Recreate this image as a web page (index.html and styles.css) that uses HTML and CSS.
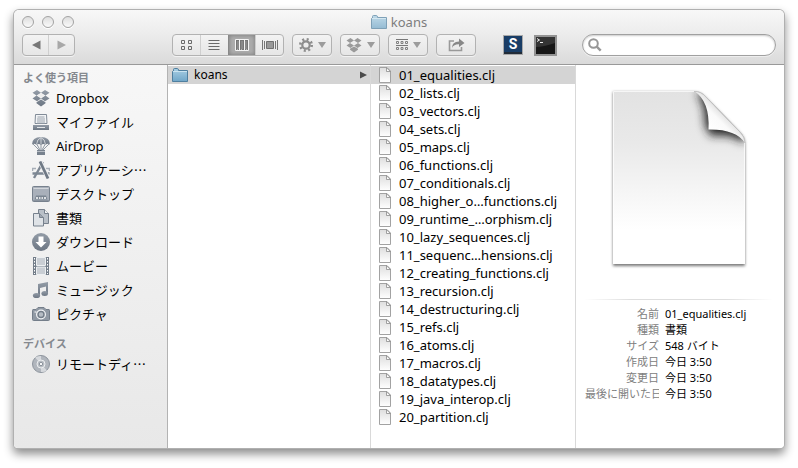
FILE: index.html
```html
<!DOCTYPE html>
<html lang="ja">
<head>
<meta charset="utf-8">
<meta name="viewport" content="width=device-width, initial-scale=1">
<title>koans</title>
<link rel="stylesheet" href="styles.css">
</head>
<body>
<svg class="defs" width="0" height="0" aria-hidden="true">
  <defs>
    <linearGradient id="folder-fill" x1="0" y1="0" x2="0" y2="1"><stop offset="0" stop-color="#a9cfe4"/><stop offset="1" stop-color="#6fa6c8"/></linearGradient>
    <linearGradient id="file-fill" x1="0" y1="0" x2="0" y2="1"><stop offset="0" stop-color="#dedede"/><stop offset="1" stop-color="#fff"/></linearGradient>
    <linearGradient id="side-fill" x1="0" y1="0" x2="0" y2="1"><stop offset="0" stop-color="#939ca7"/><stop offset="1" stop-color="#6c7683"/></linearGradient>
    <symbol id="folder" viewBox="0 0 16 14">
      <path d="M.5 13.500V3.500H1.500V1.500Q1.500.5 2.500.5H5.500Q6.500.5 6.500 2.500H15.500V13.500Z" fill="url(#folder-fill)" stroke="#4f7f9f"/>
      <path d="M1 3.500H15" stroke="#c9e3f0"/>
    </symbol>
    <symbol id="file" viewBox="0 0 12 16">
      <path d="M.5.5H8L11.500 4V15.500H.5Z" fill="url(#file-fill)" stroke="#a2a2a2"/>
      <path d="M7.500.8V4.500H11.500Z" fill="#fff" stroke="#8c8c8c" stroke-width=".8"/>
    </symbol>
    <symbol id="dropbox" viewBox="0 0 18 17">
      <path d="M5 0 9 2.700 4.500 5.600.5 2.700ZM13 0 17.500 2.700 13.500 5.600 9 2.700ZM4.500 5.600 9 8.500 5 11.300.5 8.500ZM13.500 5.600 17.500 8.500 13 11.300 9 8.500ZM4.500 12.200 9 9.500 13.500 12.200V13.300L9 16.500 4.500 13.300Z"/>
      <path d="M9 3.300 12.800 5.600 9 8 5.200 5.600Z" fill="#eee"/>
    </symbol>
  </defs>
</svg>
<div class="window">
  <header class="header">
    <div class="titlebar">
      <div class="lights">
        <button aria-label="閉じる"></button><button aria-label="しまう"></button><button aria-label="拡大"></button>
      </div>
      <h1 class="title"><svg width="16" height="14"><use href="#folder"/></svg>koans</h1>
    </div>
    <div class="toolbar">
      <div class="segments nav">
        <button aria-label="戻る"><svg width="10" height="10" viewBox="0 0 10 10"><path d="M1 5 9.500.5V9.500Z" fill="#777"/></svg></button>
        <button aria-label="進む"><svg width="10" height="10" viewBox="0 0 10 10"><path d="M9 5 .5.5V9.500Z" fill="#a8a8a8"/></svg></button>
      </div>
      <div class="segments views">
        <button aria-label="アイコン表示"><svg width="12" height="12" viewBox="0 0 12 12" fill="none" stroke="#6a6a6a"><path d="M1.500 1.500h3v3h-3zM8.500 1.500h3v3h-3zM1.500 7.500h3v3h-3zM8.500 7.500h3v3h-3z"/></svg></button>
        <button aria-label="リスト表示"><svg width="12" height="12" viewBox="0 0 12 12" stroke="#6a6a6a"><path d="M.5 1.500h11M.5 4.500h11M.5 7.500h11M.5 10.500h11"/></svg></button>
        <button class="pressed" aria-label="カラム表示" aria-pressed="true"><svg width="14" height="12" viewBox="0 0 14 12"><path d="M.5.5h13v11H.5z" fill="#777" stroke="#f4f4f4"/><path d="M2.500 2v8.500M4.500 1v10M6.500 2v8.500M9.500 1v10M11.500 2v8.500" stroke="#f4f4f4"/><path d="M3 2v8M7 2v8M11 2v8" stroke="#8a8a8a" stroke-width="2"/></svg></button>
        <button aria-label="カバーフロー表示"><svg width="16" height="12" viewBox="0 0 16 12"><path d="M.5 1v10M2.500 2v8M13.500 2v8M15.500 1v10" stroke="#777"/><path d="M4.500 2.500h7v7h-7z" fill="#999" stroke="#707070"/></svg></button>
      </div>
      <button class="tool" aria-label="アクション"><svg width="14" height="14" viewBox="0 0 14 14"><circle cx="7" cy="7" r="5.700" fill="none" stroke="#8d8d8d" stroke-width="2.600" stroke-dasharray="2 2.477"/><circle cx="7" cy="7" r="3.700" fill="none" stroke="#8d8d8d" stroke-width="2.200"/></svg><i class="arrow"></i></button>
      <button class="tool" aria-label="Dropbox"><svg width="16" height="15" fill="#9a9a9a"><use href="#dropbox"/></svg><i class="arrow"></i></button>
      <button class="tool" aria-label="項目の並び順序"><svg width="12" height="12" viewBox="0 0 12 12"><path d="M0 .5h12M0 6.500h12" stroke="#777"/><path d="M.5 2.500h2v2h-2zM5 2.500h2v2H5zM9.500 2.500h2v2h-2zM.5 8.500h2v2h-2zM5 8.500h2v2H5zM9.500 8.500h2v2h-2z" fill="none" stroke="#808080"/></svg><i class="arrow"></i></button>
      <button class="tool share" aria-label="共有"><svg width="17" height="14" viewBox="0 0 17 14"><path d="M6 3H1.500V12.500H13.500V9" fill="none" stroke="#999" stroke-width="1.600"/><path d="M4 10Q4 3.500 11 3.500V.5L16.500 5 11 9V6.300Q6 6 4 10Z" fill="#888"/></svg></button>
      <button class="app sublime" aria-label="Sublime Text"><svg width="20" height="20" viewBox="0 0 20 20"><path d="M1 1H19V18H1Z" fill="#193d66"/><path d="M0 0H20V20H0Z" fill="none" stroke="#a9a9a9" stroke-width="2"/><path d="M1 17h18v2H1z" fill="#222c38"/></svg><span>S</span></button>
      <button class="app" aria-label="ターミナル"><svg width="23" height="21" viewBox="0 0 23 21"><path d="M1 1H22V20H1Z" fill="#171717" stroke="#939393" stroke-width="2"/><path d="M2 2H21V8Q9 12 2 12Z" fill="#343434"/><path d="m3 3.500 2.500 1.500L3 6.500M6 7.500h3" fill="none" stroke="#eee"/></svg></button>
      <label class="search">
        <svg width="14" height="14" viewBox="0 0 14 14" fill="none" stroke="#979797"><circle cx="5.500" cy="5.500" r="4.300" stroke-width="2"/><path d="m8.700 8.700 4 4" stroke-width="2.400"/></svg>
        <input type="search" aria-label="検索">
      </label>
    </div>
  </header>
  <main class="browser">
    <nav class="sidebar" aria-label="サイドバー">
      <h2>よく使う項目</h2>
      <a href="#"><svg width="18" height="17" fill="url(#side-fill)"><use href="#dropbox"/></svg><span lang="en">Dropbox</span></a>
      <a href="#"><svg width="18" height="16" viewBox="0 0 18 16"><path d="M3.500.5h11l.5 9H3z" fill="#f2f4f6" stroke="#818b97"/><path d="M5.500 3h7M5 5h8M5 7h8M5 9h8" stroke="#9aa2ac"/><path d="M1 11H17v5H1Z" fill="url(#side-fill)"/><path d="M5 13.500h8" stroke="#e4e7ea"/></svg><span>マイファイル</span></a>
      <a href="#"><svg width="18" height="18" viewBox="0 0 18 18"><path d="m1 7 6 6M5 7.500 8 13M9 7v6M13 7.500 10 13M17 7l-6 6" stroke="#8f98a3"/><path d="M0 7.500Q0 0 9 0T18 7.500Q15.500 6 13.500 8 11.500 6 9 8 6.500 6 4.500 8 2.500 6 0 7.500Z" fill="url(#side-fill)"/><path d="M4.500 7.500Q5 2 9 .5 13 2 13.500 7.500M9 1v6.500" fill="none" stroke="#dfe2e5" stroke-width=".8"/><path d="M5 13h8v5H5z" fill="#77818d"/><path d="M5 14.500h8" fill="none" stroke="#b5bbc3"/></svg><span lang="en">AirDrop</span></a>
      <a href="#"><svg width="18" height="18" viewBox="0 0 18 18" fill="none" stroke="#7d8793"><path d="M.5 10V7.500H4M17.500 10V7.500H14" stroke="#a7aeb7" stroke-width="1.500"/><path d="M.5 12.500H17.500" stroke-width="2.600"/><path d="M11 1 2 17" stroke-width="2.400"/><path d="m8.500 1 7.500 16" stroke="#eff0f1" stroke-width="4.500"/><path d="m8 .5 8 17" stroke="#6f7985" stroke-width="2.800"/></svg><span>アプリケーシ…</span></a>
      <a href="#"><svg width="18" height="16" viewBox="0 0 18 16"><rect x=".5" y=".5" width="17" height="15" rx="1" fill="#a9b0ba" stroke="#77818d"/><path d="M1.500 2.500h15" stroke="#d2d6db"/><path d="M1 14h16v1H1z" fill="#8b949f"/><path d="m4 9.500-1.500 4h13l-1.500-4Z" fill="#7b8591"/><path d="M4 12h2M7 12h1.500M9.500 12H11M12 12h2" stroke="#fff" stroke-width="1.500"/></svg><span>デスクトップ</span></a>
      <a href="#"><svg width="18" height="18" viewBox="0 0 18 18"><path d="M6.500.5h6l4 4v10h-10Z" fill="#b9c0c8" stroke="#77818d"/><path d="M12.500.5v4h4" fill="#f4f5f6" stroke="#77818d"/><path d="M1.500 4.500h6l4 4v8.500h-10Z" fill="#dfe3e7" stroke="#77818d"/><path d="M7.500 4.500v4h4" fill="#9ea6b0" stroke="#77818d"/></svg><span>書類</span></a>
      <a href="#"><svg width="18" height="18" viewBox="0 0 18 18"><circle cx="9" cy="9" r="9" fill="url(#side-fill)"/><path d="M6.500 3.500h5V9H14.500L9 14.500 3.500 9h3Z" fill="#fff"/></svg><span>ダウンロード</span></a>
      <a href="#"><svg width="18" height="18" viewBox="0 0 18 18"><path d="M1 0h16v18H1Z" fill="#737d89"/><path d="M4.500.5h9v8h-9zM4.500 10h9v7.500h-9z" fill="#c9ced4" stroke="#edf0f2"/><path d="M2.500 1v16M15.500 1v16" stroke="#fff" stroke-dasharray="1.500 1.500"/></svg><span>ムービー</span></a>
      <a href="#"><svg width="18" height="18" viewBox="0 0 18 18" fill="url(#side-fill)"><path d="M6 3 16 1V12.500h-2V5.500L8 7V15H6Z"/><ellipse cx="4.500" cy="14.500" rx="3.600" ry="2.600"/><ellipse cx="12.700" cy="12.500" rx="3.300" ry="2.500"/></svg><span>ミュージック</span></a>
      <a href="#"><svg width="18" height="14" viewBox="0 0 18 14"><path d="M1 2.500H4L6 .5h6l2 2h3q.5 0 .5 1v9q0 1-1 1h-15q-1 0-1-1v-9q0-1 .5-1Z" fill="#9099a4" stroke="#747e8a"/><circle cx="9" cy="7.500" r="5" fill="#f1f3f5"/><circle cx="9" cy="7.500" r="3" fill="#b5bcc4" stroke="#737d89" stroke-width="1.500"/><path d="M2.500 5h2" stroke="#fff"/></svg><span>ピクチャ</span></a>
      <h2>デバイス</h2>
      <a href="#"><svg width="18" height="18" viewBox="0 0 18 18"><circle cx="9" cy="9" r="8.500" fill="#b1b6bd" stroke="#8d949d"/><path d="M9 9 3 2.500Q6 .7 9 1ZM9 9l6 6.500Q12 17.300 9 17Z" fill="#d6d9dd"/><circle cx="9" cy="9" r="4" fill="#b9bec4" stroke="#eceef0"/><circle cx="9" cy="9" r="1.700" fill="#f5f6f7" stroke="#8d949d"/></svg><span>リモートディ…</span></a>
    </nav>
    <ul class="column">
      <li><a class="selected" href="#"><svg width="16" height="14"><use href="#folder"/></svg><span>koans</span><svg class="more" width="7" height="8" viewBox="0 0 7 8"><path d="M0 .5 7 4 0 7.500Z" fill="#4a4a4a"/></svg></a></li>
    </ul>
    <ul class="column files">
      <li><a class="selected" href="#"><svg width="12" height="16"><use href="#file"/></svg><span>01_equalities.clj</span></a></li>
      <li><a href="#"><svg width="12" height="16"><use href="#file"/></svg><span>02_lists.clj</span></a></li>
      <li><a href="#"><svg width="12" height="16"><use href="#file"/></svg><span>03_vectors.clj</span></a></li>
      <li><a href="#"><svg width="12" height="16"><use href="#file"/></svg><span>04_sets.clj</span></a></li>
      <li><a href="#"><svg width="12" height="16"><use href="#file"/></svg><span>05_maps.clj</span></a></li>
      <li><a href="#"><svg width="12" height="16"><use href="#file"/></svg><span>06_functions.clj</span></a></li>
      <li><a href="#"><svg width="12" height="16"><use href="#file"/></svg><span>07_conditionals.clj</span></a></li>
      <li><a href="#"><svg width="12" height="16"><use href="#file"/></svg><span>08_higher_o…functions.clj</span></a></li>
      <li><a href="#"><svg width="12" height="16"><use href="#file"/></svg><span>09_runtime_…orphism.clj</span></a></li>
      <li><a href="#"><svg width="12" height="16"><use href="#file"/></svg><span>10_lazy_sequences.clj</span></a></li>
      <li><a href="#"><svg width="12" height="16"><use href="#file"/></svg><span>11_sequenc…hensions.clj</span></a></li>
      <li><a href="#"><svg width="12" height="16"><use href="#file"/></svg><span>12_creating_functions.clj</span></a></li>
      <li><a href="#"><svg width="12" height="16"><use href="#file"/></svg><span>13_recursion.clj</span></a></li>
      <li><a href="#"><svg width="12" height="16"><use href="#file"/></svg><span>14_destructuring.clj</span></a></li>
      <li><a href="#"><svg width="12" height="16"><use href="#file"/></svg><span>15_refs.clj</span></a></li>
      <li><a href="#"><svg width="12" height="16"><use href="#file"/></svg><span>16_atoms.clj</span></a></li>
      <li><a href="#"><svg width="12" height="16"><use href="#file"/></svg><span>17_macros.clj</span></a></li>
      <li><a href="#"><svg width="12" height="16"><use href="#file"/></svg><span>18_datatypes.clj</span></a></li>
      <li><a href="#"><svg width="12" height="16"><use href="#file"/></svg><span>19_java_interop.clj</span></a></li>
      <li><a href="#"><svg width="12" height="16"><use href="#file"/></svg><span>20_partition.clj</span></a></li>
    </ul>
    <section class="preview" aria-label="プレビュー">
      <svg class="document" width="140" height="184" viewBox="-4 -4 140 184" aria-hidden="true">
        <defs>
          <linearGradient id="page" x1="0" y1="0" x2="0" y2="1"><stop offset="0" stop-color="#e2e2e2"/><stop offset=".3" stop-color="#e9e9e9"/><stop offset=".8" stop-color="#fff"/></linearGradient>
          <linearGradient id="curl" gradientUnits="userSpaceOnUse" x1="96" y1="38" x2="112" y2="22"><stop offset="0" stop-color="#fff"/><stop offset=".6" stop-color="#fafafa"/><stop offset="1" stop-color="#dcdcdc"/></linearGradient>
          <filter id="soft" x="-50%" y="-50%" width="200%" height="200%"><feGaussianBlur stdDeviation="5"/></filter>
          <filter id="drop" x="-10%" y="-10%" width="120%" height="120%"><feGaussianBlur stdDeviation="1.500"/></filter>
          <clipPath id="sheet"><path d="M0 0H81Q88 0 93 6L127 41Q132 46 132 52V173H0Z"/></clipPath>
        </defs>
        <path d="M0 1H81Q88 1 93 7L127 42Q132 47 132 53V175H0Z" fill="#777" filter="url(#drop)"/>
        <path d="M0 0H81Q88 0 93 6L127 41Q132 46 132 52V173H0Z" fill="url(#page)"/>
        <g clip-path="url(#sheet)"><path d="M84 2Q93 14 92 34L98 45Q120 42 130 52L140 30 100 0Z" fill="#222" filter="url(#soft)"/></g>
        <path d="M81 0Q88 0 93 6L127 41Q132 46 132 52 123 38 95.500 38.500 97 10 81 0Z" fill="url(#curl)"/>
        <path d="M81 .5Q88 0 93 6L127 41Q132 46 132 52" fill="none" stroke="#c2c2c2"/>
        <path d="M.5 173V.5H81M131.500 52V173" fill="none" stroke="#fff" opacity=".7"/>
      </svg>
      <dl class="info">
        <dt>名前</dt><dd>01_equalities.clj</dd>
        <dt>種類</dt><dd>書類</dd>
        <dt>サイズ</dt><dd>548 バイト</dd>
        <dt>作成日</dt><dd>今日 3:50</dd>
        <dt>変更日</dt><dd>今日 3:50</dd>
        <dt>最後に開いた日</dt><dd>今日 3:50</dd>
      </dl>
    </section>
  </main>
</div>
</body>
</html>
```
FILE: styles.css
```css
* { box-sizing: border-box; }

body {
  margin: 0;
  min-height: 100vh;
  padding: 10px 14px 20px;
  display: flex;
  background: #fff;
  color: #000;
  font: 12px/18px "Noto Sans", "Noto Sans CJK JP", sans-serif;
}

.defs { position: absolute; }
svg { display: block; flex: none; }
button { margin: 0; padding: 0; border: 0; background: none; font: inherit; }
h1, h2, ul, dl, dd { margin: 0; padding: 0; }
ul { list-style: none; }
a { color: inherit; text-decoration: none; }

.window {
  flex: 1;
  min-width: 0;
  display: flex;
  flex-direction: column;
  border-radius: 5px 5px 4px 4px;
  overflow: hidden;
  box-shadow: 0 0 0 1px #b0b0b0, 0 5px 10px 1px rgba(0, 0, 0, .45);
}

.header {
  padding: 4px 8px 8px;
  border-bottom: 1px solid #999;
  background: linear-gradient(#f8f8f8, #ececec 45%, #dadada);
}

.titlebar {
  display: grid;
  grid-template-columns: 1fr auto 1fr;
  height: 16px;
  align-items: center;
}

.lights { display: flex; gap: 8px; }
.lights button {
  width: 12px;
  height: 12px;
  border: 1px solid #a3a3a3;
  border-radius: 50%;
  background: linear-gradient(#dedede, #fafafa);
  box-shadow: 0 1px #fff;
}

.title {
  display: flex;
  align-items: center;
  gap: 4px;
  color: #7d7d7d;
  font-size: 13px;
  font-weight: 400;
  line-height: 16px;
}
.title svg { opacity: .7; }

.toolbar { display: flex; align-items: center; gap: 8px; margin-top: 4px; }

.segments, .tool {
  display: flex;
  height: 22px;
  border: 1px solid #b2b2b2;
  border-radius: 4px;
  background: linear-gradient(#f3f3f3, #e6e6e6);
  box-shadow: 0 1px rgba(255, 255, 255, .6);
}
.segments button { flex: 1; display: flex; align-items: center; justify-content: center; }
.segments button + button { border-left: 1px solid #cfcfcf; }
.nav { width: 53px; }
.views { width: 112px; margin-left: 89px; overflow: hidden; }
.segments .pressed {
  border-color: #888;
  background: #adadad;
  box-shadow: inset 0 0 4px #777;
}
.tool { width: 40px; align-items: center; justify-content: center; gap: 5px; }
.arrow {
  border: 4px solid transparent;
  border-top: 6px solid #9c9c9c;
  border-bottom: 0;
}

.app { position: relative; margin-left: 3px; }
.sublime { margin-left: 19px; }
.sublime span {
  position: absolute;
  inset: 0;
  color: #fff;
  font: bold 14px/19px "Roboto", sans-serif;
  text-align: center;
}

.search {
  display: flex;
  align-items: center;
  gap: 4px;
  width: 194px;
  height: 22px;
  margin-left: auto;
  padding: 0 8px 0 5px;
  border: 1px solid #a0a0a0;
  border-radius: 11px;
  background: #fff;
  box-shadow: inset 0 1px 2px #ccc, 0 1px #eee;
}
.search input {
  flex: 1;
  min-width: 0;
  border: 0;
  outline: 0;
  background: none;
  font: inherit;
}

.browser {
  flex: 1;
  display: grid;
  grid-template-columns: 154px 203px 205px 1fr;
  background: #fff;
}

.sidebar {
  padding: 3px 0 0 9px;
  border-right: 1px solid #b3b3b3;
  background: linear-gradient(#f7f7f7, #e8e8e8);
  font-family: "Noto Sans CJK JP", sans-serif;
  font-size: 13px;
}
.sidebar h2 {
  height: 18px;
  color: #85898f;
  font-size: 11px;
  font-weight: 700;
  line-height: 18px;
}
.sidebar a {
  display: flex;
  align-items: center;
  gap: 6px;
  height: 24px;
  padding-left: 9px;
  line-height: 24px;
  white-space: nowrap;
}
.sidebar a svg { width: 18px; }
.sidebar [lang="en"] { font-family: "Noto Sans", sans-serif; }
.sidebar a + h2 { margin-top: 8px; }

.column { padding-top: 1px; border-right: 1px solid #d9d9d9; }
.column a {
  display: flex;
  align-items: center;
  gap: 6px;
  height: 18px;
  padding: 0 3px 0 4px;
  white-space: nowrap;
}
.column .selected { background: #d4d4d4; }
.column .more { margin-left: auto; }
.files a { gap: 8px; padding-left: 8px; font-size: 13px; }

.preview { padding: 22px 12px 0 9px; }
.document { margin: 0 auto; }
.info {
  display: grid;
  grid-template-columns: 74px 1fr;
  column-gap: 6px;
  margin-top: 28px;
  padding-top: 6px;
  border-top: 1px solid;
  border-image: linear-gradient(90deg, #fff, #dedede 25%, #dedede 75%, #fff) 1;
  font-size: 11px;
  line-height: 16px;
  white-space: nowrap;
}
.info dt { overflow: hidden; color: #808080; text-align: right; }
```
